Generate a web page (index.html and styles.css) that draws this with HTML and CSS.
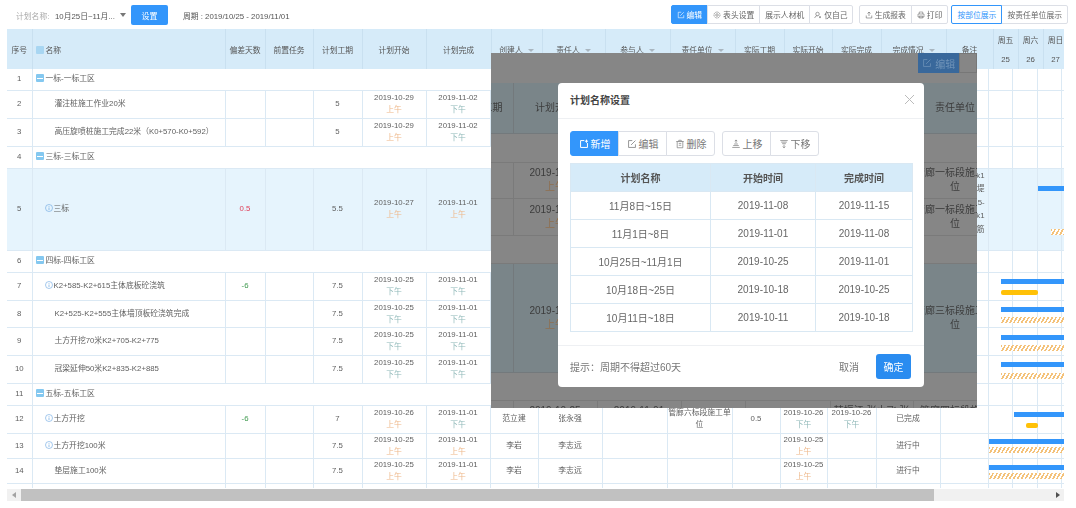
FILE: index.html
```html
<!DOCTYPE html>
<html lang="zh-CN">
<head>
    <meta charset="UTF-8">
    <meta name="viewport" content="width=device-width, initial-scale=1.0">
    <title>计划名称设置</title>
    <link rel="stylesheet" href="styles.css">
</head>
<body>
    <svg class="defs" width="0" height="0">
        <symbol id="i-edit" viewBox="0 0 16 16"><path d="M13.500 8.500v5h-11v-11h6M6.500 9.500l7-7" fill="none" stroke="currentColor" stroke-width="1.200"/></symbol>
        <symbol id="i-add" viewBox="0 0 16 16"><path d="M8.500 2.500h-6v11h11v-7M12 1v5M9.500 3.500h5" fill="none" stroke="currentColor" stroke-width="1.600"/></symbol>
        <symbol id="i-trash" viewBox="0 0 16 16"><path d="M2 4h12M6 4V2h4v2M3.500 4v10h9V4M6 7h4M6 10h4" fill="none" stroke="currentColor" stroke-width="1.100"/></symbol>
        <symbol id="i-up" viewBox="0 0 16 16"><path d="M8 1.500v5M6 3.500l2-2 2 2M5 8h6M3.500 10.500h9M2 13.500h12" fill="none" stroke="currentColor" stroke-width="1.100"/></symbol>
        <symbol id="i-down" viewBox="0 0 16 16"><path d="M2 2.500h12M3.500 5h9M5 7.500h6M8 9v5.500M6 12l2 2 2-2" fill="none" stroke="currentColor" stroke-width="1.100"/></symbol>
        <symbol id="i-gear" viewBox="0 0 16 16"><circle cx="8" cy="8" r="2.500" fill="none" stroke="currentColor" stroke-width="1.200"/><circle cx="8" cy="8" r="6" fill="none" stroke="currentColor" stroke-width="1.200" stroke-dasharray="3 1"/></symbol>
        <symbol id="i-user" viewBox="0 0 16 16"><circle cx="7" cy="6" r="3.500" fill="none" stroke="currentColor" stroke-width="1.200"/><path d="M1.500 14c.5-3 2.500-4.500 5.500-4.500M10 10.500l4 3.500M14 10.500l-4 3.500" fill="none" stroke="currentColor" stroke-width="1.200"/></symbol>
        <symbol id="i-export" viewBox="0 0 16 16"><path d="M8 10V2M5 5l3-3 3 3M2.500 9v5h11V9" fill="none" stroke="currentColor" stroke-width="1.200"/></symbol>
        <symbol id="i-print" viewBox="0 0 16 16"><path d="M4.500 6V2h7v4M2 6h12v6H2zM4.500 10h7v4h-7z" fill="none" stroke="currentColor" stroke-width="1.100"/></symbol>
        <symbol id="i-info" viewBox="0 0 16 16"><circle cx="8" cy="8" r="7" fill="none" stroke="#6aa6e0" stroke-width="1.200"/><path d="M8 7v5M8 4v1.500" stroke="#6aa6e0" stroke-width="1.400"/></symbol>
    </svg>

    <div class="page">
        <div class="topbar">
            <div class="filter">
                <span class="filter-label">计划名称:</span>
                <span class="filter-value">10月25日~11月...</span>
                <span class="caret"></span>
                <button class="btn btn-set">设置</button>
                <span class="period">周期 : 2019/10/25 - 2019/11/01</span>
            </div>
            <div class="tools">
                <div class="group">
                    <button class="tool tool-on"><svg class="ico"><use href="#i-edit"/></svg>编辑</button>
                    <button class="tool"><svg class="ico"><use href="#i-gear"/></svg>表头设置</button>
                    <button class="tool">展示人材机</button>
                    <button class="tool tool-tight"><svg class="ico"><use href="#i-user"/></svg>仅自己</button>
                </div>
                <div class="group group-report">
                    <button class="tool"><svg class="ico"><use href="#i-export"/></svg>生成报表</button>
                    <button class="tool"><svg class="ico"><use href="#i-print"/></svg>打印</button>
                </div>
                <div class="group group-view">
                    <button class="tool tool-active">按部位展示</button>
                    <button class="tool">按责任单位展示</button>
                </div>
            </div>
        </div>

        <div class="grid">
            <table class="head-table">
                <colgroup>
                    <col class="w25"><col class="w193"><col class="w40"><col class="w48"><col class="w49"><col class="w64"><col class="w65"><col class="w51"><col class="w63"><col class="w65"><col class="w65"><col class="w49"><col class="w48"><col class="w49"><col class="w65"><col class="w47"><col class="w25"><col class="w25"><col class="w25">
                </colgroup>
                <tr class="h21">
                    <th rowspan="2">序号</th>
                    <th rowspan="2" class="left"><i class="tree tree-plain"></i>名称</th>
                    <th rowspan="2">偏差天数</th>
                    <th rowspan="2">前置任务</th>
                    <th rowspan="2">计划工期</th>
                    <th rowspan="2">计划开始</th>
                    <th rowspan="2">计划完成</th>
                    <th rowspan="2">创建人<i class="sort"></i></th>
                    <th rowspan="2">责任人<i class="sort"></i></th>
                    <th rowspan="2">参与人<i class="sort"></i></th>
                    <th rowspan="2">责任单位<i class="sort"></i></th>
                    <th rowspan="2">实际工期</th>
                    <th rowspan="2">实际开始</th>
                    <th rowspan="2">实际完成</th>
                    <th rowspan="2">完成情况<i class="sort"></i></th>
                    <th rowspan="2">备注</th>
                    <th>周五</th><th>周六</th><th>周日</th>
                </tr>
                <tr class="h19"><th>25</th><th>26</th><th>27</th></tr>
            </table>

            <div class="body-wrap">
                <table class="body-table">
                    <colgroup>
                        <col class="w25"><col class="w193"><col class="w40"><col class="w48"><col class="w49"><col class="w64"><col class="w64"><col class="w48"><col class="w64"><col class="w65"><col class="w65"><col class="w48"><col class="w47"><col class="w49"><col class="w64"><col class="w48"><col class="w24"><col class="w25"><col class="w24"><col class="w24">
                    </colgroup>

                    <tr class="h21"><td>1</td><td colspan="15" class="left"><i class="tree"></i>一标-一标工区</td><td></td><td></td><td></td><td></td></tr>

                    <tr class="h28"><td>2</td><td class="left indent">灌注桩施工作业20米</td><td></td><td></td><td>5</td><td>2019-10-29<b class="am">上午</b></td><td>2019-11-02<b class="pm">下午</b></td><td colspan="9"></td><td></td><td></td><td></td><td></td></tr>

                    <tr class="h28"><td>3</td><td class="left indent">高压旋喷桩施工完成22米（K0+570-K0+592）</td><td></td><td></td><td>5</td><td>2019-10-29<b class="am">上午</b></td><td>2019-11-02<b class="pm">下午</b></td><td colspan="9"></td><td></td><td></td><td></td><td></td></tr>

                    <tr class="h22"><td>4</td><td colspan="15" class="left"><i class="tree"></i>三标-三标工区</td><td></td><td></td><td></td><td></td></tr>

                    <tr class="h82 row-on"><td>5</td><td class="left info"><svg class="ico-info"><use href="#i-info"/></svg>三标</td><td class="late">0.5</td><td></td><td>5.5</td><td>2019-10-27<b class="am">上午</b></td><td>2019-11-01<b class="am">上午</b></td><td colspan="8"></td><td class="note">k1<br>堤<br>5-<br>k1<br>筋</td>
                        <td class="gantt"><i class="bar bar-plan" style="left:49px;top:17px"></i><i class="bar bar-real" style="left:62px;top:60px"></i></td><td></td><td></td><td></td></tr>

                    <tr class="h22"><td>6</td><td colspan="15" class="left"><i class="tree"></i>四标-四标工区</td><td></td><td></td><td></td><td></td></tr>

                    <tr class="h28"><td>7</td><td class="left info"><svg class="ico-info"><use href="#i-info"/></svg>K2+585-K2+615主体底板砼浇筑</td><td class="early">-6</td><td></td><td>7.5</td><td>2019-10-25<b class="pm">下午</b></td><td>2019-11-01<b class="pm">下午</b></td><td colspan="9"></td>
                        <td class="gantt"><i class="bar bar-plan" style="left:12px;top:6px"></i><i class="bar bar-done" style="left:12px;top:17px;width:37px"></i></td><td></td><td></td><td></td></tr>

                    <tr class="h27"><td>8</td><td class="left indent">K2+525-K2+555主体墙顶板砼浇筑完成</td><td></td><td></td><td>7.5</td><td>2019-10-25<b class="pm">下午</b></td><td>2019-11-01<b class="pm">下午</b></td><td colspan="9"></td>
                        <td class="gantt"><i class="bar bar-plan" style="left:12px;top:6px"></i><i class="bar bar-real" style="left:12px;top:16px"></i></td><td></td><td></td><td></td></tr>

                    <tr class="h28"><td>9</td><td class="left indent">土方开挖70米K2+705-K2+775</td><td></td><td></td><td>7.5</td><td>2019-10-25<b class="pm">下午</b></td><td>2019-11-01<b class="pm">下午</b></td><td colspan="9"></td>
                        <td class="gantt"><i class="bar bar-plan" style="left:12px;top:7px"></i><i class="bar bar-real" style="left:12px;top:17px"></i></td><td></td><td></td><td></td></tr>

                    <tr class="h28"><td>10</td><td class="left indent">冠梁延伸50米K2+835-K2+885</td><td></td><td></td><td>7.5</td><td>2019-10-25<b class="pm">下午</b></td><td>2019-11-01<b class="pm">下午</b></td><td colspan="9"></td>
                        <td class="gantt"><i class="bar bar-plan" style="left:12px;top:6px"></i><i class="bar bar-real" style="left:12px;top:17px"></i></td><td></td><td></td><td></td></tr>

                    <tr class="h22"><td>11</td><td colspan="15" class="left"><i class="tree"></i>五标-五标工区</td><td></td><td></td><td></td><td></td></tr>

                    <tr class="h28"><td>12</td><td class="left info"><svg class="ico-info"><use href="#i-info"/></svg>土方开挖</td><td class="early">-6</td><td></td><td>7</td><td>2019-10-26<b class="am">上午</b></td><td>2019-11-01<b class="pm">下午</b></td><td>范立建</td><td>张永强</td><td></td><td>管廊六标段施工单位</td><td>0.5</td><td>2019-10-26<b class="pm">下午</b></td><td>2019-10-26<b class="pm">下午</b></td><td>已完成</td><td></td>
                        <td class="gantt"><i class="bar bar-plan" style="left:25px;top:6px"></i><i class="bar bar-done" style="left:37px;top:17px;width:12px"></i></td><td></td><td></td><td></td></tr>

                    <tr class="h23"><td>13</td><td class="left info"><svg class="ico-info"><use href="#i-info"/></svg>土方开挖100米</td><td></td><td></td><td>7.5</td><td>2019-10-25<b class="am">上午</b></td><td>2019-11-01<b class="am">上午</b></td><td>李岩</td><td>李志远</td><td></td><td></td><td></td><td>2019-10-25<b class="am">上午</b></td><td></td><td>进行中</td><td></td>
                        <td class="gantt"><i class="bar bar-plan" style="left:0;top:5px"></i><i class="bar bar-real" style="left:0;top:13px"></i></td><td></td><td></td><td></td></tr>

                    <tr class="h24"><td>14</td><td class="left indent">垫层施工100米</td><td></td><td></td><td>7.5</td><td>2019-10-25<b class="am">上午</b></td><td>2019-11-01<b class="am">上午</b></td><td>李岩</td><td>李志远</td><td></td><td></td><td></td><td>2019-10-25<b class="am">上午</b></td><td></td><td>进行中</td><td></td>
                        <td class="gantt"><i class="bar bar-plan" style="left:0;top:6px"></i><i class="bar bar-real" style="left:0;top:14px"></i></td><td></td><td></td><td></td></tr>

                    <tr class="h24"><td></td><td></td><td></td><td></td><td></td><td>2019-10-25</td><td>2019-11-01</td><td></td><td></td><td></td><td></td><td></td><td>2019-10-25</td><td></td><td></td><td></td>
                        <td class="gantt"><i class="bar bar-plan" style="left:0;top:5px"></i></td><td></td><td></td><td></td></tr>
                </table>
            </div>

            <div class="scrollbar">
                <span class="arrow arrow-left"></span>
                <span class="thumb"></span>
                <span class="arrow arrow-right"></span>
            </div>
        </div>

        <div class="mask">
            <div class="ghost-bar">
                <span class="ghost-edit"><svg class="ghost-ico"><use href="#i-edit"/></svg>编辑</span>
                <span class="ghost-next"></span>
            </div>
            <table class="ghost-table">
                <colgroup><col class="w22"><col class="w84"><col class="w84"><col class="w64"><col class="w85"><col class="w83"><col class="w84"></colgroup>
                <tr class="ghost-head h50"><td class="ghost-cut">工期</td><td>计划开始</td><td></td><td></td><td></td><td></td><td>责任单位</td></tr>
                <tr class="h29"><td colspan="7"></td></tr>
                <tr class="h36"><td></td><td>2019-10-29<b class="ghost-am">上午</b></td><td></td><td></td><td></td><td></td><td>管廊一标段施工单位</td></tr>
                <tr class="h37"><td></td><td>2019-10-27<b class="ghost-am">上午</b></td><td></td><td></td><td></td><td></td><td>管廊一标段施工单位</td></tr>
                <tr class="h28"><td colspan="7"></td></tr>
                <tr class="ghost-band h109"><td></td><td>2019-10-25<b class="ghost-am">上午</b></td><td></td><td></td><td></td><td></td><td>管廊三标段施工单位</td></tr>
                <tr class="h28"><td colspan="7"></td></tr>
                <tr class="ghost-last h28"><td></td><td>2019-10-25</td><td>2019-11-01</td><td></td><td></td><td>韩振江 张小飞 张</td><td>管廊四标段施工</td></tr>
            </table>
        </div>

        <div class="modal">
            <div class="modal-title">
                <span>计划名称设置</span>
                <span class="modal-close"></span>
            </div>
            <div class="modal-body">
                <div class="modal-tools">
                    <div class="group">
                        <button class="mbtn mbtn-on"><svg class="mico"><use href="#i-add"/></svg>新增</button>
                        <button class="mbtn"><svg class="mico"><use href="#i-edit"/></svg>编辑</button>
                        <button class="mbtn"><svg class="mico"><use href="#i-trash"/></svg>删除</button>
                    </div>
                    <div class="group">
                        <button class="mbtn"><svg class="mico"><use href="#i-up"/></svg>上移</button>
                        <button class="mbtn"><svg class="mico"><use href="#i-down"/></svg>下移</button>
                    </div>
                </div>
                <table class="plan-table">
                    <colgroup><col class="w140"><col class="w105"><col class="w97"></colgroup>
                    <tr class="plan-head"><th>计划名称</th><th>开始时间</th><th>完成时间</th></tr>
                    <tr><td>11月8日~15日</td><td>2019-11-08</td><td>2019-11-15</td></tr>
                    <tr><td>11月1日~8日</td><td>2019-11-01</td><td>2019-11-08</td></tr>
                    <tr><td>10月25日~11月1日</td><td>2019-10-25</td><td>2019-11-01</td></tr>
                    <tr><td>10月18日~25日</td><td>2019-10-18</td><td>2019-10-25</td></tr>
                    <tr><td>10月11日~18日</td><td>2019-10-11</td><td>2019-10-18</td></tr>
                </table>
            </div>
            <div class="modal-foot">
                <span class="tip">提示：周期不得超过60天</span>
                <button class="cancel">取消</button>
                <button class="confirm">确定</button>
            </div>
        </div>
    </div>
</body>
</html>
```

FILE: styles.css
```css
* {
    margin: 0;
    padding: 0;
    box-sizing: border-box;
}

body {
    font-family: "Liberation Sans", "Noto Sans CJK SC", sans-serif;
    font-size: 7.8px;
    color: #5f5f5f;
    background: #fff;
}

button {
    font-family: inherit;
}

.defs {
    position: absolute;
}

.page {
    position: relative;
    width: 1076px;
    height: 508px;
    overflow: hidden;
    filter: blur(0.35px);
}

/* top bar */
.topbar {
    height: 29px;
    padding: 5px 8px 0 16px;
    display: flex;
    justify-content: space-between;
}

.filter {
    display: flex;
    align-items: center;
    height: 20px;
}

.filter-label {
    color: #aaa;
    width: 39px;
}

.filter-value {
    width: 65px;
    color: #555;
}

.caret {
    width: 0;
    height: 0;
    border: 3px solid transparent;
    border-top: 4px solid #777;
    border-bottom: 0;
    margin-right: 5px;
}

.btn-set {
    width: 37px;
    height: 20px;
    margin-right: 15px;
    border: none;
    border-radius: 2px;
    background: #3396fb;
    color: #fff;
    font-size: 8px;
}

.period {
    color: #555;
}

.tools {
    display: flex;
}

.group {
    display: flex;
}

.group-report {
    margin-left: 6px;
}

.group-view {
    margin-left: 3px;
}

.tool {
    height: 19px;
    padding: 0 5px;
    display: flex;
    align-items: center;
    gap: 2px;
    border: 1px solid #dcdfe6;
    margin-left: -1px;
    background: #fff;
    color: #666;
    font-size: 7.8px;
    white-space: nowrap;
}

.tool-tight {
    padding: 0 4px;
}

.group .tool:first-child {
    margin-left: 0;
    border-radius: 2px 0 0 2px;
}

.group .tool:last-child {
    border-radius: 0 2px 2px 0;
}

.tool-on {
    background: #3396fb;
    border-color: #3396fb;
    color: #fff;
}

.tool-active {
    border-color: #3396fb;
    color: #3396fb;
    position: relative;
}

.ico {
    width: 8px;
    height: 8px;
}

/* grid */
.grid {
    width: 1057px;
    margin-left: 7px;
    overflow: hidden;
}

table {
    border-collapse: collapse;
    table-layout: fixed;
}

.head-table {
    width: 1061px;
    background: #d6ebf9;
}

.head-table th {
    font-weight: normal;
    color: #555;
    text-align: center;
    border-right: 1px solid #c9e0f0;
    white-space: nowrap;
    overflow: hidden;
}

.head-table .left {
    text-align: left;
    padding-left: 3px;
}

.body-wrap {
    height: 419px;
    overflow: hidden;
}

.body-table {
    width: 1078px;
}

.body-table td {
    text-align: center;
    border-right: 1px solid #dbe9f4;
    border-bottom: 1px solid #dbe9f4;
    line-height: 12px;
    overflow: hidden;
}

.body-table td.gantt {
    position: relative;
    overflow: visible;
}

.body-table .left {
    text-align: left;
    padding-left: 3px;
}

.body-table .indent {
    padding-left: 22px;
}

.body-table .info {
    padding-left: 12px;
}

.row-on td {
    background: #e6f4fd;
}

td b {
    display: block;
    font-weight: normal;
}

.am {
    color: #eeb88a;
}

.pm {
    color: #8fb8b8;
}

.late {
    color: #e0405a;
}

.early {
    color: #3f9a4f;
}

.body-table .note {
    text-align: right;
    padding: 0 3px 13px 0;
    line-height: 13.5px;
}

.tree {
    display: inline-block;
    width: 8px;
    height: 8px;
    margin-right: 2px;
    vertical-align: -1px;
    border-radius: 1px;
    background: linear-gradient(#fff, #fff) center / 6px 1px no-repeat, #84c8f0;
}

.tree-plain {
    background: #a8d6f2;
}

.ico-info {
    width: 8px;
    height: 8px;
    margin-right: 1px;
    vertical-align: -1px;
}

.sort {
    display: inline-block;
    width: 0;
    height: 0;
    margin-left: 5px;
    vertical-align: 1px;
    border: 3px solid transparent;
    border-top: 3px solid #a9b6c0;
    border-bottom: 0;
}

.bar {
    position: absolute;
    height: 5px;
    width: 100px;
}

.bar-plan {
    background: #3396fb;
}

.bar-done {
    background: #ffc107;
    border-radius: 2px;
}

.bar-real {
    height: 6px;
    background: repeating-linear-gradient(-60deg, #f4c27a 0 1.600px, #fff 1.600px 3.400px);
}

/* horizontal scroll bar */
.scrollbar {
    height: 12px;
    margin-top: 1px;
    background: #f1f1f1;
    display: flex;
    align-items: center;
}

.arrow {
    width: 0;
    height: 0;
    border: 3px solid transparent;
}

.arrow-left {
    border-right: 4px solid #a3a3a3;
    border-left: 0;
    margin-left: 5px;
}

.thumb {
    width: 913px;
    height: 12px;
    margin-left: 5px;
    background: #c1c1c1;
}

.arrow-right {
    border-left: 4px solid #505050;
    border-right: 0;
    margin-left: 122px;
}

/* mask and the page seen behind it */
.mask {
    position: absolute;
    left: 491px;
    top: 53px;
    width: 486px;
    height: 355px;
    overflow: hidden;
    background: #868686;
    color: #3c3c3c;
    font-size: 10px;
}

.ghost-bar {
    height: 30px;
    padding-left: 427px;
    display: flex;
    align-items: flex-start;
}

.ghost-edit {
    width: 48px;
    height: 20px;
    display: flex;
    align-items: center;
    justify-content: center;
    gap: 3px;
    background: #39689b;
    color: #6f93b8;
}

.ghost-ico {
    width: 10px;
    height: 10px;
}

.ghost-next {
    width: 20px;
    height: 20px;
    border: 1px solid #777;
}

.ghost-table {
    width: 506px;
}

.ghost-table td {
    text-align: center;
    line-height: 14px;
    border-right: 1px solid #7a7a7a;
    border-bottom: 1px solid #7a7a7a;
    overflow: hidden;
}

.ghost-table td.ghost-cut {
    text-align: right;
    direction: rtl;
    white-space: nowrap;
    padding-right: 10px;
}

.ghost-head td,
.ghost-band td {
    background: #7a8589;
    border-color: #73797c;
}

.ghost-am {
    color: #8f6f4f;
}

.ghost-last td {
    vertical-align: top;
    white-space: nowrap;
    padding-top: 3px;
}

/* modal */
.modal {
    position: absolute;
    left: 558px;
    top: 83px;
    width: 366px;
    height: 304px;
    background: #fff;
    border-radius: 4px;
    display: flex;
    flex-direction: column;
    font-size: 10px;
}

.modal-title {
    height: 36px;
    padding: 0 12px 2px;
    display: flex;
    align-items: center;
    justify-content: space-between;
    border-bottom: 1px solid #eef0f3;
    font-weight: bold;
    color: #444;
}

.modal-close {
    width: 9px;
    height: 9px;
    margin-right: -2px;
    background:
        linear-gradient(45deg, transparent 46%, #bbb 46% 54%, transparent 54%),
        linear-gradient(-45deg, transparent 46%, #bbb 46% 54%, transparent 54%);
}

.modal-body {
    padding: 12px 12px 0;
    flex: 1;
}

.modal-tools {
    display: flex;
    gap: 7px;
    margin-bottom: 7px;
}

.mbtn {
    width: 49px;
    height: 25px;
    display: flex;
    align-items: center;
    justify-content: center;
    gap: 2px;
    border: 1px solid #dcdfe6;
    margin-left: -1px;
    background: #fff;
    color: #777;
    font-size: 10px;
}

.group .mbtn:first-child {
    margin-left: 0;
    border-radius: 3px 0 0 3px;
}

.group .mbtn:last-child {
    border-radius: 0 3px 3px 0;
}

.mbtn-on {
    background: #3396fb;
    border-color: #3396fb;
    color: #fff;
}

.mico {
    width: 10px;
    height: 10px;
}

.plan-table {
    width: 342px;
    color: #666;
}

.plan-table th,
.plan-table td {
    height: 28px;
    text-align: center;
    border: 1px solid #d9e8f3;
    font-weight: normal;
}

.plan-table th {
    background: #d6ebf9;
    color: #555;
    font-weight: bold;
}

.modal-foot {
    height: 42px;
    padding: 0 13px 0 12px;
    display: flex;
    align-items: center;
    border-top: 1px solid #eef0f3;
    color: #777;
}

.tip {
    flex: 1;
}

.cancel {
    width: 24px;
    margin-right: 15px;
    border: none;
    background: none;
    color: #777;
    font-size: 10px;
}

.confirm {
    width: 35px;
    height: 25px;
    border: none;
    border-radius: 3px;
    background: #2a8cf0;
    color: #fff;
    font-size: 10px;
}

/* column widths */
.w22 { width: 22px; }
.w24 { width: 24px; }
.w25 { width: 25px; }
.w40 { width: 40px; }
.w47 { width: 47px; }
.w48 { width: 48px; }
.w49 { width: 49px; }
.w51 { width: 51px; }
.w63 { width: 63px; }
.w64 { width: 64px; }
.w65 { width: 65px; }
.w83 { width: 83px; }
.w84 { width: 84px; }
.w85 { width: 85px; }
.w97 { width: 97px; }
.w105 { width: 105px; }
.w140 { width: 140px; }
.w193 { width: 193px; }

/* row heights */
.h19 { height: 19px; }
.h21 { height: 21px; }
.h22 { height: 22px; }
.h23 { height: 23px; }
.h24 { height: 24px; }
.h27 { height: 27px; }
.h28 { height: 28px; }
.h29 { height: 29px; }
.h36 { height: 36px; }
.h37 { height: 37px; }
.h50 { height: 50px; }
.h82 { height: 82px; }
.h109 { height: 109px; }
```
